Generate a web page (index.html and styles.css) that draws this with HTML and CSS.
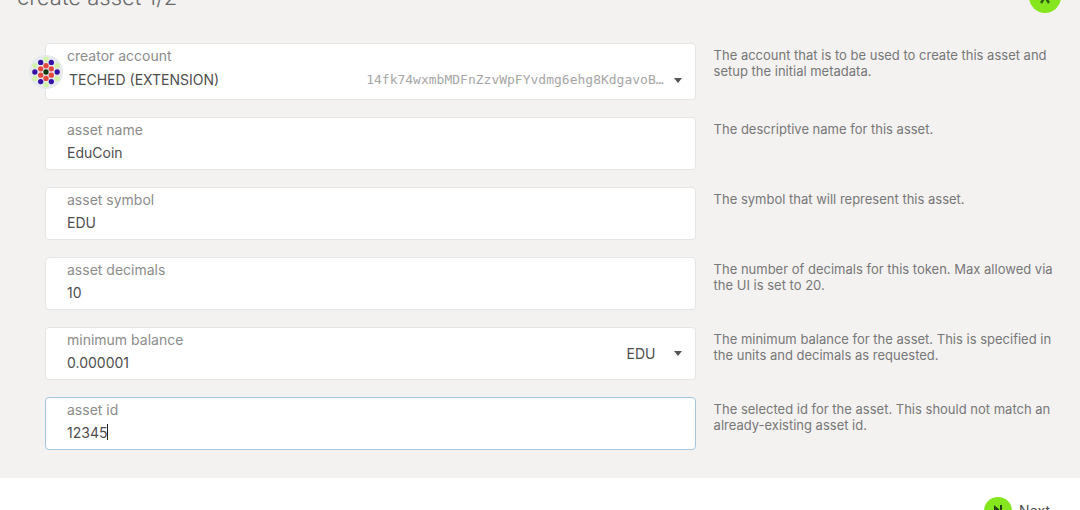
FILE: index.html
```html
<!DOCTYPE html>
<html lang="en">
<head>
<meta charset="utf-8">
<title>create asset</title>
<link rel="stylesheet" href="styles.css">
</head>
<body>
<main class="modal">
  <div class="content">
    <header class="header">
      <h1 class="title">create asset 1/2</h1>
      <button class="close" type="button" aria-label="Close">
        <svg width="12" height="14" viewBox="0 0 12 14"><path d="M2 1l8 12M10 1L2 13" stroke="#2c5a12" stroke-width="2.4" fill="none"/></svg>
      </button>
    </header>
    <form class="form">
      <div class="row">
        <div class="field account">
          <svg class="identicon" viewBox="0 0 64 64" aria-hidden="true">
            <circle cx="32" cy="32" r="32" fill="#e6e9ee"/>
            <g fill="#d3f3a8"><circle cx="32" cy="8" r="5"/><circle cx="32" cy="56" r="5"/><circle cx="11" cy="20" r="5"/><circle cx="53" cy="20" r="5"/><circle cx="11" cy="44" r="5"/><circle cx="53" cy="44" r="5"/></g>
            <g fill="#3412a4"><circle cx="22" cy="14" r="5"/><circle cx="42" cy="14" r="5"/><circle cx="11" cy="32" r="5"/><circle cx="53" cy="32" r="5"/><circle cx="22" cy="50" r="5"/><circle cx="42" cy="50" r="5"/></g>
            <g fill="#e5483c"><circle cx="32" cy="20" r="5"/><circle cx="32" cy="44" r="5"/><circle cx="22" cy="26" r="5"/><circle cx="42" cy="26" r="5"/><circle cx="22" cy="38" r="5"/><circle cx="42" cy="38" r="5"/></g>
            <circle cx="32" cy="32" r="5" fill="#123a10"/>
          </svg>
          <label class="label" for="account">creator account</label>
          <button class="picker" id="account" type="button">
            <span class="name">TECHED (EXTENSION)</span>
            <span class="address">14fk74wxmbMDFnZzvWpFYvdmg6ehg8KdgavoB…</span>
            <span class="arrow"></span>
          </button>
        </div>
        <p class="help">The account that is to be used to create this asset and setup the initial metadata.</p>
      </div>
      <div class="row">
        <div class="field">
          <label class="label" for="name">asset name</label>
          <input class="input" id="name" type="text" value="EduCoin">
        </div>
        <p class="help">The descriptive name for this asset.</p>
      </div>
      <div class="row">
        <div class="field">
          <label class="label" for="symbol">asset symbol</label>
          <input class="input" id="symbol" type="text" value="EDU">
        </div>
        <p class="help">The symbol that will represent this asset.</p>
      </div>
      <div class="row">
        <div class="field">
          <label class="label" for="decimals">asset decimals</label>
          <input class="input" id="decimals" type="text" value="10">
        </div>
        <p class="help">The number of decimals for this token. Max allowed via the UI is set to 20.</p>
      </div>
      <div class="row">
        <div class="field balance">
          <div class="amount">
            <label class="label" for="minimum">minimum balance</label>
            <input class="input" id="minimum" type="text" value="0.000001">
          </div>
          <div class="unit">
            <select class="select" aria-label="unit"><option>EDU</option></select>
            <span class="arrow"></span>
          </div>
        </div>
        <p class="help">The minimum balance for the asset. This is specified in the units and decimals as requested.</p>
      </div>
      <div class="row">
        <div class="field active">
          <label class="label" for="id">asset id</label>
          <div class="typing">
            <input class="input fit" id="id" type="text" value="12345">
            <span class="caret"></span>
          </div>
        </div>
        <p class="help">The selected id for the asset. This should not match an already-existing asset id.</p>
      </div>
    </form>
  </div>
  <footer class="footer">
    <button class="next" type="button">
      <span class="next-icon">
        <svg width="10" height="12" viewBox="0 0 10 12" aria-hidden="true"><path d="M1 0l6 5V0h2v12H7V7l-6 5z" fill="#24420f"/></svg>
      </span>
      Next
    </button>
  </footer>
</main>
</body>
</html>
```
FILE: styles.css
```css
* {
  box-sizing: border-box;
}

body {
  margin: 0;
  height: 100vh;
  overflow: hidden;
  background: #fff;
  color: #4e4e4e;
  font: 14px/18px Inter, "Liberation Sans", sans-serif;
}

button,
input,
select {
  margin: 0;
  padding: 0;
  border: 0;
  outline: 0;
  background: none;
  color: inherit;
  font: inherit;
}

.content {
  padding: 0 24px 28px 45px;
  background: #f3f2f1;
}

/* The dialog is scrolled, so its header is partly above the viewport. */
.header {
  display: flex;
  align-items: center;
  justify-content: space-between;
  height: 32px;
  margin: 0 -5px 0 -28px;
  transform: translateY(-19px);
}

.title {
  margin: 0;
  color: #6a6a6a;
  font: 300 22px/28px Inter, sans-serif;
}

.close,
.next-icon {
  display: flex;
  align-items: center;
  justify-content: center;
  border-radius: 50%;
  background: #86e61e;
}

.close {
  width: 32px;
  height: 32px;
}

.form {
  display: grid;
  gap: 17px;
  padding-top: 11px;
}

.row {
  display: grid;
  grid-template-columns: 19fr 10fr;
  gap: 18px;
}

.field {
  position: relative;
  min-height: 53px;
  padding: 2px 13px 2px 21px;
  border: 1px solid #e6e5e4;
  border-radius: 4px;
  background: #fff;
}

.active {
  border-color: #a3c6dc;
}

.label {
  display: block;
  color: #8c8c8c;
  line-height: 20px;
}

.input {
  display: block;
  width: 100%;
  height: 24px;
}

.fit {
  width: auto;
  field-sizing: content;
}

.account {
  min-height: 57px;
}

.identicon {
  position: absolute;
  top: 11px;
  left: -17px;
  width: 34px;
  height: 34px;
}

.picker {
  display: flex;
  align-items: center;
  width: 100%;
  height: 28px;
  padding-left: 2px;
}

.name {
  flex: 1;
  text-align: left;
}

.address {
  color: #a6a6a6;
  font: 13px/18px "DejaVu Sans Mono", monospace;
}

.arrow {
  margin-left: 10px;
  border: 4px solid transparent;
  border-top: 5px solid #555;
  border-bottom: 0;
}

.balance,
.unit,
.typing {
  display: flex;
}

.amount {
  flex: 1;
}

.unit {
  align-items: center;
}

.select {
  width: 37px;
  appearance: none;
}

.typing {
  align-items: center;
}

.caret {
  width: 1px;
  height: 16px;
  background: #222;
}

.help {
  margin: 0;
  padding-top: 4px;
  color: #777;
  font-size: 13px;
  line-height: 16px;
}

.footer {
  display: flex;
  justify-content: flex-end;
  padding: 19px 30px;
}

.next {
  display: flex;
  align-items: center;
  gap: 7px;
}

.next-icon {
  width: 28px;
  height: 28px;
}
```
